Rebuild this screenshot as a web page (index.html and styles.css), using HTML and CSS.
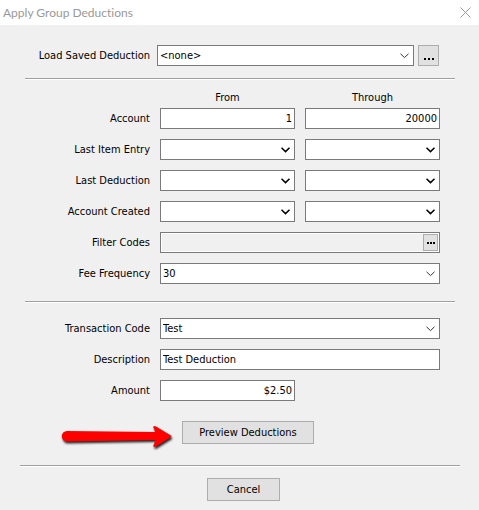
FILE: index.html
```html
<!DOCTYPE html>
<html lang="en">
<head>
<meta charset="utf-8">
<meta name="viewport" content="width=device-width, initial-scale=1">
<title>Apply Group Deductions</title>
<link rel="stylesheet" href="styles.css">
</head>
<body>
<svg class="sprite" aria-hidden="true">
  <symbol id="chevron" viewBox="0 0 9 6"><path d="M.5 .8 4.5 4.6 8.500 .8" fill="none" stroke="currentColor"/></symbol>
  <symbol id="dots" viewBox="0 0 8 2"><path d="M0 0h2v2H0zM3 0h2v2H3zM6 0h2v2H6z" fill="currentColor"/></symbol>
</svg>
<main class="dialog">
  <header class="titlebar">
    <h1 class="title">Apply Group Deductions</h1>
    <button class="close" type="button" aria-label="Close">
      <svg width="11" height="11" viewBox="0 0 11 11"><path d="M.5 .5l10 10M10.5 .5l-10 10" fill="none" stroke="currentColor"/></svg>
    </button>
  </header>
  <form class="form">
    <div class="load">
      <label class="label" for="saved">Load Saved Deduction</label>
      <div class="combo"><select class="field" id="saved"><option>&lt;none&gt;</option></select><svg class="chevron"><use href="#chevron"/></svg></div>
      <button class="button browse" type="button" aria-label="Browse saved deductions"><svg class="ellipsis" viewBox="0 0 10 2"><path d="M0 0h2v2H0zM4 0h2v2H4zM8 0h2v2H8z" fill="currentColor"/></svg></button>
    </div>
    <hr class="rule">
    <div class="grid criteria">
      <span class="heading from" id="from">From</span>
      <span class="heading" id="through">Through</span>

      <label class="label" for="account" id="l-account">Account</label>
      <input class="field number" id="account" type="text" value="1">
      <input class="field number" type="text" value="20000" aria-labelledby="l-account through">

      <label class="label" for="entry" id="l-entry">Last Item Entry</label>
      <div class="combo date"><select class="field" id="entry"><option></option></select><svg class="chevron"><use href="#chevron"/></svg></div>
      <div class="combo date"><select class="field" aria-labelledby="l-entry through"><option></option></select><svg class="chevron"><use href="#chevron"/></svg></div>

      <label class="label" for="last" id="l-last">Last Deduction</label>
      <div class="combo date"><select class="field" id="last"><option></option></select><svg class="chevron"><use href="#chevron"/></svg></div>
      <div class="combo date"><select class="field" aria-labelledby="l-last through"><option></option></select><svg class="chevron"><use href="#chevron"/></svg></div>

      <label class="label" for="created" id="l-created">Account Created</label>
      <div class="combo date"><select class="field" id="created"><option></option></select><svg class="chevron"><use href="#chevron"/></svg></div>
      <div class="combo date"><select class="field" aria-labelledby="l-created through"><option></option></select><svg class="chevron"><use href="#chevron"/></svg></div>

      <label class="label" for="filter">Filter Codes</label>
      <div class="filter wide">
        <input class="filter-input" id="filter" type="text" readonly>
        <button class="button filter-button" type="button" aria-label="Choose filter codes"><svg class="dots"><use href="#dots"/></svg></button>
      </div>

      <label class="label" for="frequency">Fee Frequency</label>
      <div class="combo wide"><select class="field" id="frequency"><option>30</option></select><svg class="chevron"><use href="#chevron"/></svg></div>
    </div>
    <hr class="rule">
    <div class="grid transaction">
      <label class="label" for="code">Transaction Code</label>
      <div class="combo wide"><select class="field" id="code"><option>Test</option></select><svg class="chevron"><use href="#chevron"/></svg></div>
      <label class="label" for="description">Description</label>
      <input class="field wide" id="description" type="text" value="Test Deduction">
      <label class="label" for="amount">Amount</label>
      <input class="field number" id="amount" type="text" value="$2.50">
    </div>
    <div class="preview">
      <svg class="arrow" viewBox="0 0 110 23" aria-hidden="true">
        <path d="M5 10 93 11Q93 8.500 91.300 6.800Q91 4.300 94 5.500L108.500 14.200Q110 15.300 108.500 16.400L94 25.500Q91 26.800 91.300 24.200Q93 22 93 19L5 20.500A5 5 0 0 1 5 10Z"/>
      </svg>
      <button class="button preview-button" type="button">Preview Deductions</button>
    </div>
  </form>
  <footer class="footer">
    <hr class="rule">
    <div class="actions"><button class="button cancel" type="button">Cancel</button></div>
  </footer>
</main>
</body>
</html>
```
FILE: styles.css
```css
* { box-sizing: border-box; }
body {
  margin: 0;
  background: #f0f0f0;
  color: #000;
  font: 11px/15px "DejaVu Sans Condensed", "Noto Sans", sans-serif;
}
button, input, select { font: inherit; color: inherit; border-radius: 0; }
svg { display: block; }
.sprite { display: none; }
.dialog { min-height: 100vh; }
.titlebar {
  display: flex;
  align-items: center;
  justify-content: space-between;
  height: 25px;
  padding: 0 8px 0 3px;
  background: #fff;
  color: #999;
}
.title { margin: 0; font: 12px/16px Lato, "Open Sans", sans-serif; font-variant-ligatures: none; }
.close { padding: 0; border: 0; background: none; }
.form { padding: 20px 24px 0 25px; }
.rule { height: 2px; margin: 0; border: 0; border-top: 1px solid #a0a0a0; background: #fff; }
.label { text-align: right; white-space: nowrap; }
.load {
  display: grid;
  grid-template-columns: 125px 1fr 21px;
  column-gap: 4px;
  align-items: center;
  padding-right: 16px;
  margin-bottom: 12px;
}
.load .combo { margin-left: 3px; }
.grid {
  display: grid;
  grid-template-columns: 125px 1fr 1fr;
  gap: 10px;
  align-items: center;
  padding-right: 15px;
}
.criteria { padding-top: 11px; margin-bottom: 17px; }
.heading { text-align: center; line-height: 14px; height: 7px; }
.from { grid-column: 2; }
.wide { grid-column: 2 / -1; }
.field {
  width: 100%;
  height: 21px;
  padding: 0 2px;
  border: 1px solid #7a7a7a;
  background: #fff;
  appearance: none;
}
.number { text-align: right; }
.combo { display: grid; align-items: center; }
.combo > * { grid-area: 1 / 1; }
.chevron { width: 9px; height: 6px; justify-self: end; margin-right: 5px; pointer-events: none; color: #333; }
.date .chevron { color: #000; stroke-width: 1.5; }
.button { padding: 0; border: 1px solid #adadad; background: #e1e1e1; }
.browse { height: 21px; }
.ellipsis { width: 10px; height: 2px; margin: 6px auto 0; }
.filter { display: flex; height: 21px; padding: 1px; border: 1px solid #7a7a7a; background: #fff; }
.filter-input { flex: 1; min-width: 0; border: 0; padding: 0 2px; background: #f0f0f0; }
.filter-button { width: 15px; }
.dots { width: 8px; height: 2px; margin: 0 auto; }
.transaction { padding-top: 15px; margin-bottom: 20px; }
.preview { display: flex; align-items: center; gap: 10px; padding-left: 37px; margin-bottom: 21px; }
.arrow { width: 110px; height: 23px; overflow: visible; fill: #f00; filter: drop-shadow(1px 2px 1px rgb(0 0 0 / 85%)); }
.preview-button { width: 132px; height: 23px; }
.footer { padding: 0 19px 9px 20px; }
.actions { display: flex; justify-content: center; padding: 11px 0 0 7px; }
.cancel { width: 73px; height: 23px; }
```
